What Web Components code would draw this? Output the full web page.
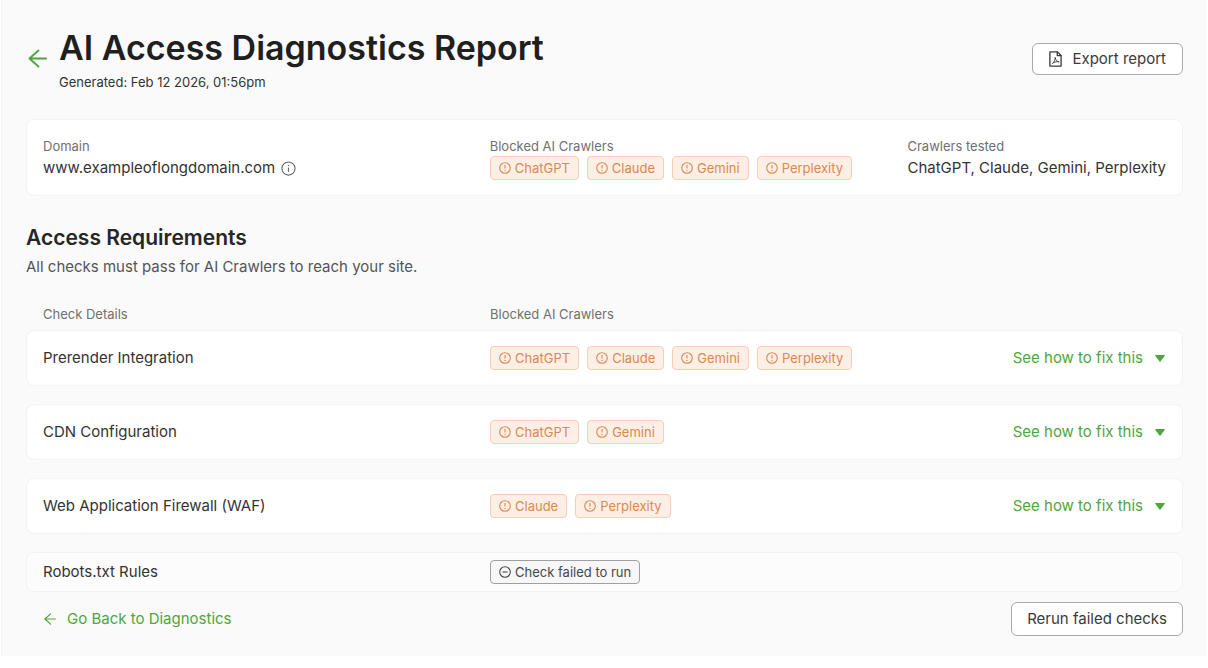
<!DOCTYPE html>
<html lang="en">
<head>
<meta charset="utf-8">
<meta name="viewport" content="width=device-width, initial-scale=1">
<title>AI Access Diagnostics Report</title>
<style>
  body {
    margin: 0;
    background: #ffffff;
    font-family: Inter, "Liberation Sans", sans-serif;
    font-size: 15px;
    line-height: 24px;
    color: #333333;
    --green: #4fa63b;
    --ink: #1f1f1f;
    --muted: #707070;
    --card-border: #f3f3f3;
    --columns: 447fr 418fr 258fr;
  }
</style>
</head>
<body>
<report-page>
  <report-header slot="header" generated="Feb 12 2026, 01:56pm">AI Access Diagnostics Report</report-header>
  <report-summary
    domain="www.exampleoflongdomain.com"
    blocked="ChatGPT,Claude,Gemini,Perplexity"
    tested="ChatGPT, Claude, Gemini, Perplexity"
  ></report-summary>
  <access-checks>
    <span slot="title">Access Requirements</span>
    <span slot="description">All checks must pass for AI Crawlers to reach your site.</span>
  </access-checks>
  <report-footer slot="footer"></report-footer>
</report-page>

<script>
(() => {
  const ICONS = {
    arrow: `<svg viewBox="0 0 20 20" fill="none" stroke="currentColor" stroke-width="2" stroke-linecap="round" stroke-linejoin="round"><path d="M19 10H1.5M11 1.5L1.5 10l9.500 8.500"/></svg>`,
    info: `<svg viewBox="0 0 16 16" fill="none" stroke="currentColor"><circle cx="8" cy="8" r="7" stroke-width="1.200"/><path d="M8 7v4.500" stroke-width="1.200"/><circle cx="8" cy="4.800" r=".8" fill="currentColor" stroke="none"/></svg>`,
    alert: `<svg viewBox="0 0 12 12" fill="none" stroke="currentColor"><circle cx="6" cy="6" r="5.300" stroke-width="1.100"/><path d="M6 3v3.600" stroke-width="1.100"/><circle cx="6" cy="8.500" r=".65" fill="currentColor" stroke="none"/></svg>`,
    minus: `<svg viewBox="0 0 12 12" fill="none" stroke="currentColor"><circle cx="6" cy="6" r="5.300" stroke-width="1.100"/><path d="M3.500 6h5" stroke-width="1.100"/></svg>`,
    pdf: `<svg viewBox="0 0 13 16" fill="none" stroke="currentColor" stroke-width="1.300" stroke-linejoin="round" stroke-linecap="round"><path d="M.9.9h7.600l3.600 3.600v10.600H.9z"/><path d="M8.300 1v3.700h3.700"/><path d="M6.200 6.400c.2 2.300-.7 4.300-2.700 6.400M6.400 7.400c.3 1.700 1.400 2.900 3.400 3.500M4.300 11.700c1.700-.9 3.400-1.200 5.400-.9" stroke-width=".9"/></svg>`,
    caret: `<svg viewBox="0 0 10 7" fill="currentColor"><path d="M.6 0h8.800a.5.5 0 0 1 .4.800L5.500 6.600a.6.6 0 0 1-1 0L.2.800A.5.5 0 0 1 .6 0z"/></svg>`,
  };

  const CHECKS = [
    { name: "Prerender Integration", blocked: ["ChatGPT", "Claude", "Gemini", "Perplexity"] },
    { name: "CDN Configuration", blocked: ["ChatGPT", "Gemini"] },
    { name: "Web Application Firewall (WAF)", blocked: ["Claude", "Perplexity"] },
    { name: "Robots.txt Rules", failed: true },
  ];

  const BASE_CSS = `
    * { box-sizing: border-box; }
    svg { display: block; width: 100%; height: 100%; }
    a { color: var(--green); text-decoration: none; }
    button { font: inherit; cursor: pointer; }
    a:focus-visible, button:focus-visible { outline: 2px solid var(--green); outline-offset: 2px; }
  `;

  const badges = (names) =>
    names.map((name) => `<status-badge kind="blocked">${name}</status-badge>`).join("");

  class BaseElement extends HTMLElement {
    constructor() {
      super();
      this.attachShadow({ mode: "open" });
    }

    connectedCallback() {
      this.shadowRoot.innerHTML = `<style>${BASE_CSS}${this.styles()}</style>${this.template()}`;
    }
  }

  class ReportPage extends BaseElement {
    styles() {
      return `
        :host {
          display: block;
          margin: 0 2px 0 1px;
          padding: 27px 23px 20px 24px;
          background: #fafafa;
          border-left: 1px solid #f3f3f3;
        }
        main { display: flex; flex-direction: column; gap: 28px; }
      `;
    }

    template() {
      return `
        <slot name="header"></slot>
        <main><slot></slot></main>
        <slot name="footer"></slot>
      `;
    }
  }

  class ReportHeader extends BaseElement {
    styles() {
      return `
        :host { display: flex; justify-content: space-between; align-items: center; margin-bottom: 29px; }
        .heading { display: flex; align-items: center; gap: 12px; padding-left: 2px; }
        .back { width: 19px; height: 19px; }
        h1 { margin: 0; font-size: 34px; line-height: 42px; font-weight: 600; color: var(--ink); }
        p { margin: 5px 0 0; font-size: 13px; line-height: 16px; }
      `;
    }

    template() {
      return `
        <div class="heading">
          <a class="back" href="#" aria-label="Back">${ICONS.arrow}</a>
          <div>
            <h1><slot></slot></h1>
            <p>Generated: ${this.getAttribute("generated")}</p>
          </div>
        </div>
        <outline-button icon="pdf">Export report</outline-button>
      `;
    }
  }

  class OutlineButton extends BaseElement {
    styles() {
      return `
        :host { display: block; }
        button {
          display: flex;
          align-items: center;
          gap: 10px;
          padding: 3px 16px;
          background: #ffffff;
          border: 1px solid #a9a9a9;
          border-radius: 6px;
          color: #3a3a3a;
          white-space: nowrap;
        }
        :host([size="lg"]) button { padding: 4px 15px; }
        .icon { width: 13px; height: 16px; }
      `;
    }

    template() {
      const icon = ICONS[this.getAttribute("icon")];
      return `<button type="button">${icon ? `<span class="icon">${icon}</span>` : ""}<slot></slot></button>`;
    }
  }

  class StatusBadge extends BaseElement {
    styles() {
      return `
        :host {
          display: inline-flex;
          align-items: center;
          gap: 4px;
          padding: 0 8px;
          border: 1px solid #f7ceb5;
          border-radius: 4px;
          background: #fdeee6;
          color: #d98a50;
          font-size: 13px;
          line-height: 22px;
          white-space: nowrap;
        }
        :host([kind="failed"]) { border-color: #a0a0a0; background: #f7f7f7; color: #484848; }
        .icon { width: 12px; height: 12px; }
      `;
    }

    template() {
      const icon = this.getAttribute("kind") === "failed" ? ICONS.minus : ICONS.alert;
      return `<span class="icon">${icon}</span><slot></slot>`;
    }
  }

  class ReportSummary extends BaseElement {
    styles() {
      return `
        :host { display: block; }
        dl {
          display: grid;
          grid-template-columns: var(--columns);
          margin: 0;
          padding: 18px 16px 15px;
          background: #ffffff;
          border: 1px solid var(--card-border);
          border-radius: 8px;
        }
        dt { margin-bottom: 2px; font-size: 13px; line-height: 16px; color: var(--muted); }
        dd { display: flex; align-items: center; gap: 8px; margin: 0; white-space: nowrap; }
        .info { width: 15px; height: 15px; color: #666666; }
        .domain { gap: 6px; }
      `;
    }

    template() {
      return `
        <dl>
          <div>
            <dt>Domain</dt>
            <dd class="domain">${this.getAttribute("domain")}<span class="info">${ICONS.info}</span></dd>
          </div>
          <div>
            <dt>Blocked AI Crawlers</dt>
            <dd>${badges(this.getAttribute("blocked").split(","))}</dd>
          </div>
          <div>
            <dt>Crawlers tested</dt>
            <dd>${this.getAttribute("tested")}</dd>
          </div>
        </dl>
      `;
    }
  }

  class AccessChecks extends BaseElement {
    styles() {
      return `
        :host { display: block; }
        h2 { margin: 0; font-size: 21px; line-height: 28px; font-weight: 600; color: #262626; }
        p { margin: 3px 0 27px; color: #555555; }
        table, thead { display: block; }
        tbody { display: flex; flex-direction: column; gap: 18px; }
        tr { display: grid; grid-template-columns: var(--columns); align-items: center; padding: 0 17px; }
        th, td { padding: 0; text-align: left; font-weight: 400; white-space: nowrap; }
        thead tr { padding-bottom: 8px; font-size: 13px; line-height: 16px; color: var(--muted); }
        tbody tr {
          padding: 15px 16px;
          background: #ffffff;
          border: 1px solid var(--card-border);
          border-radius: 8px;
        }
        tbody tr.failed { padding: 7px 16px; background: #fcfcfc; }
        .badges { display: flex; gap: 8px; }
        .fix { display: flex; justify-content: flex-end; }
        .fix a { display: flex; align-items: center; gap: 12px; }
        .caret { width: 10px; height: 7px; margin-right: 1px; }
      `;
    }

    row(check) {
      if (check.failed) {
        return `
          <tr class="failed">
            <th scope="row">${check.name}</th>
            <td class="badges"><status-badge kind="failed">Check failed to run</status-badge></td>
            <td></td>
          </tr>`;
      }
      return `
        <tr>
          <th scope="row">${check.name}</th>
          <td class="badges">${badges(check.blocked)}</td>
          <td class="fix"><a href="#">See how to fix this<span class="caret">${ICONS.caret}</span></a></td>
        </tr>`;
    }

    template() {
      return `
        <h2><slot name="title"></slot></h2>
        <p><slot name="description"></slot></p>
        <table>
          <thead>
            <tr><th scope="col">Check Details</th><th scope="col">Blocked AI Crawlers</th></tr>
          </thead>
          <tbody>${CHECKS.map((check) => this.row(check)).join("")}</tbody>
        </table>
      `;
    }
  }

  class ReportFooter extends BaseElement {
    styles() {
      return `
        :host { display: flex; justify-content: space-between; align-items: center; margin-top: 10px; }
        a { display: flex; align-items: center; gap: 11px; padding-left: 18px; }
        .arrow { width: 12px; height: 12px; }
      `;
    }

    template() {
      return `
        <a href="#"><span class="arrow">${ICONS.arrow}</span>Go Back to Diagnostics</a>
        <outline-button size="lg">Rerun failed checks</outline-button>
      `;
    }
  }

  customElements.define("status-badge", StatusBadge);
  customElements.define("outline-button", OutlineButton);
  customElements.define("report-header", ReportHeader);
  customElements.define("report-summary", ReportSummary);
  customElements.define("access-checks", AccessChecks);
  customElements.define("report-footer", ReportFooter);
  customElements.define("report-page", ReportPage);
})();
</script>
</body>
</html>
